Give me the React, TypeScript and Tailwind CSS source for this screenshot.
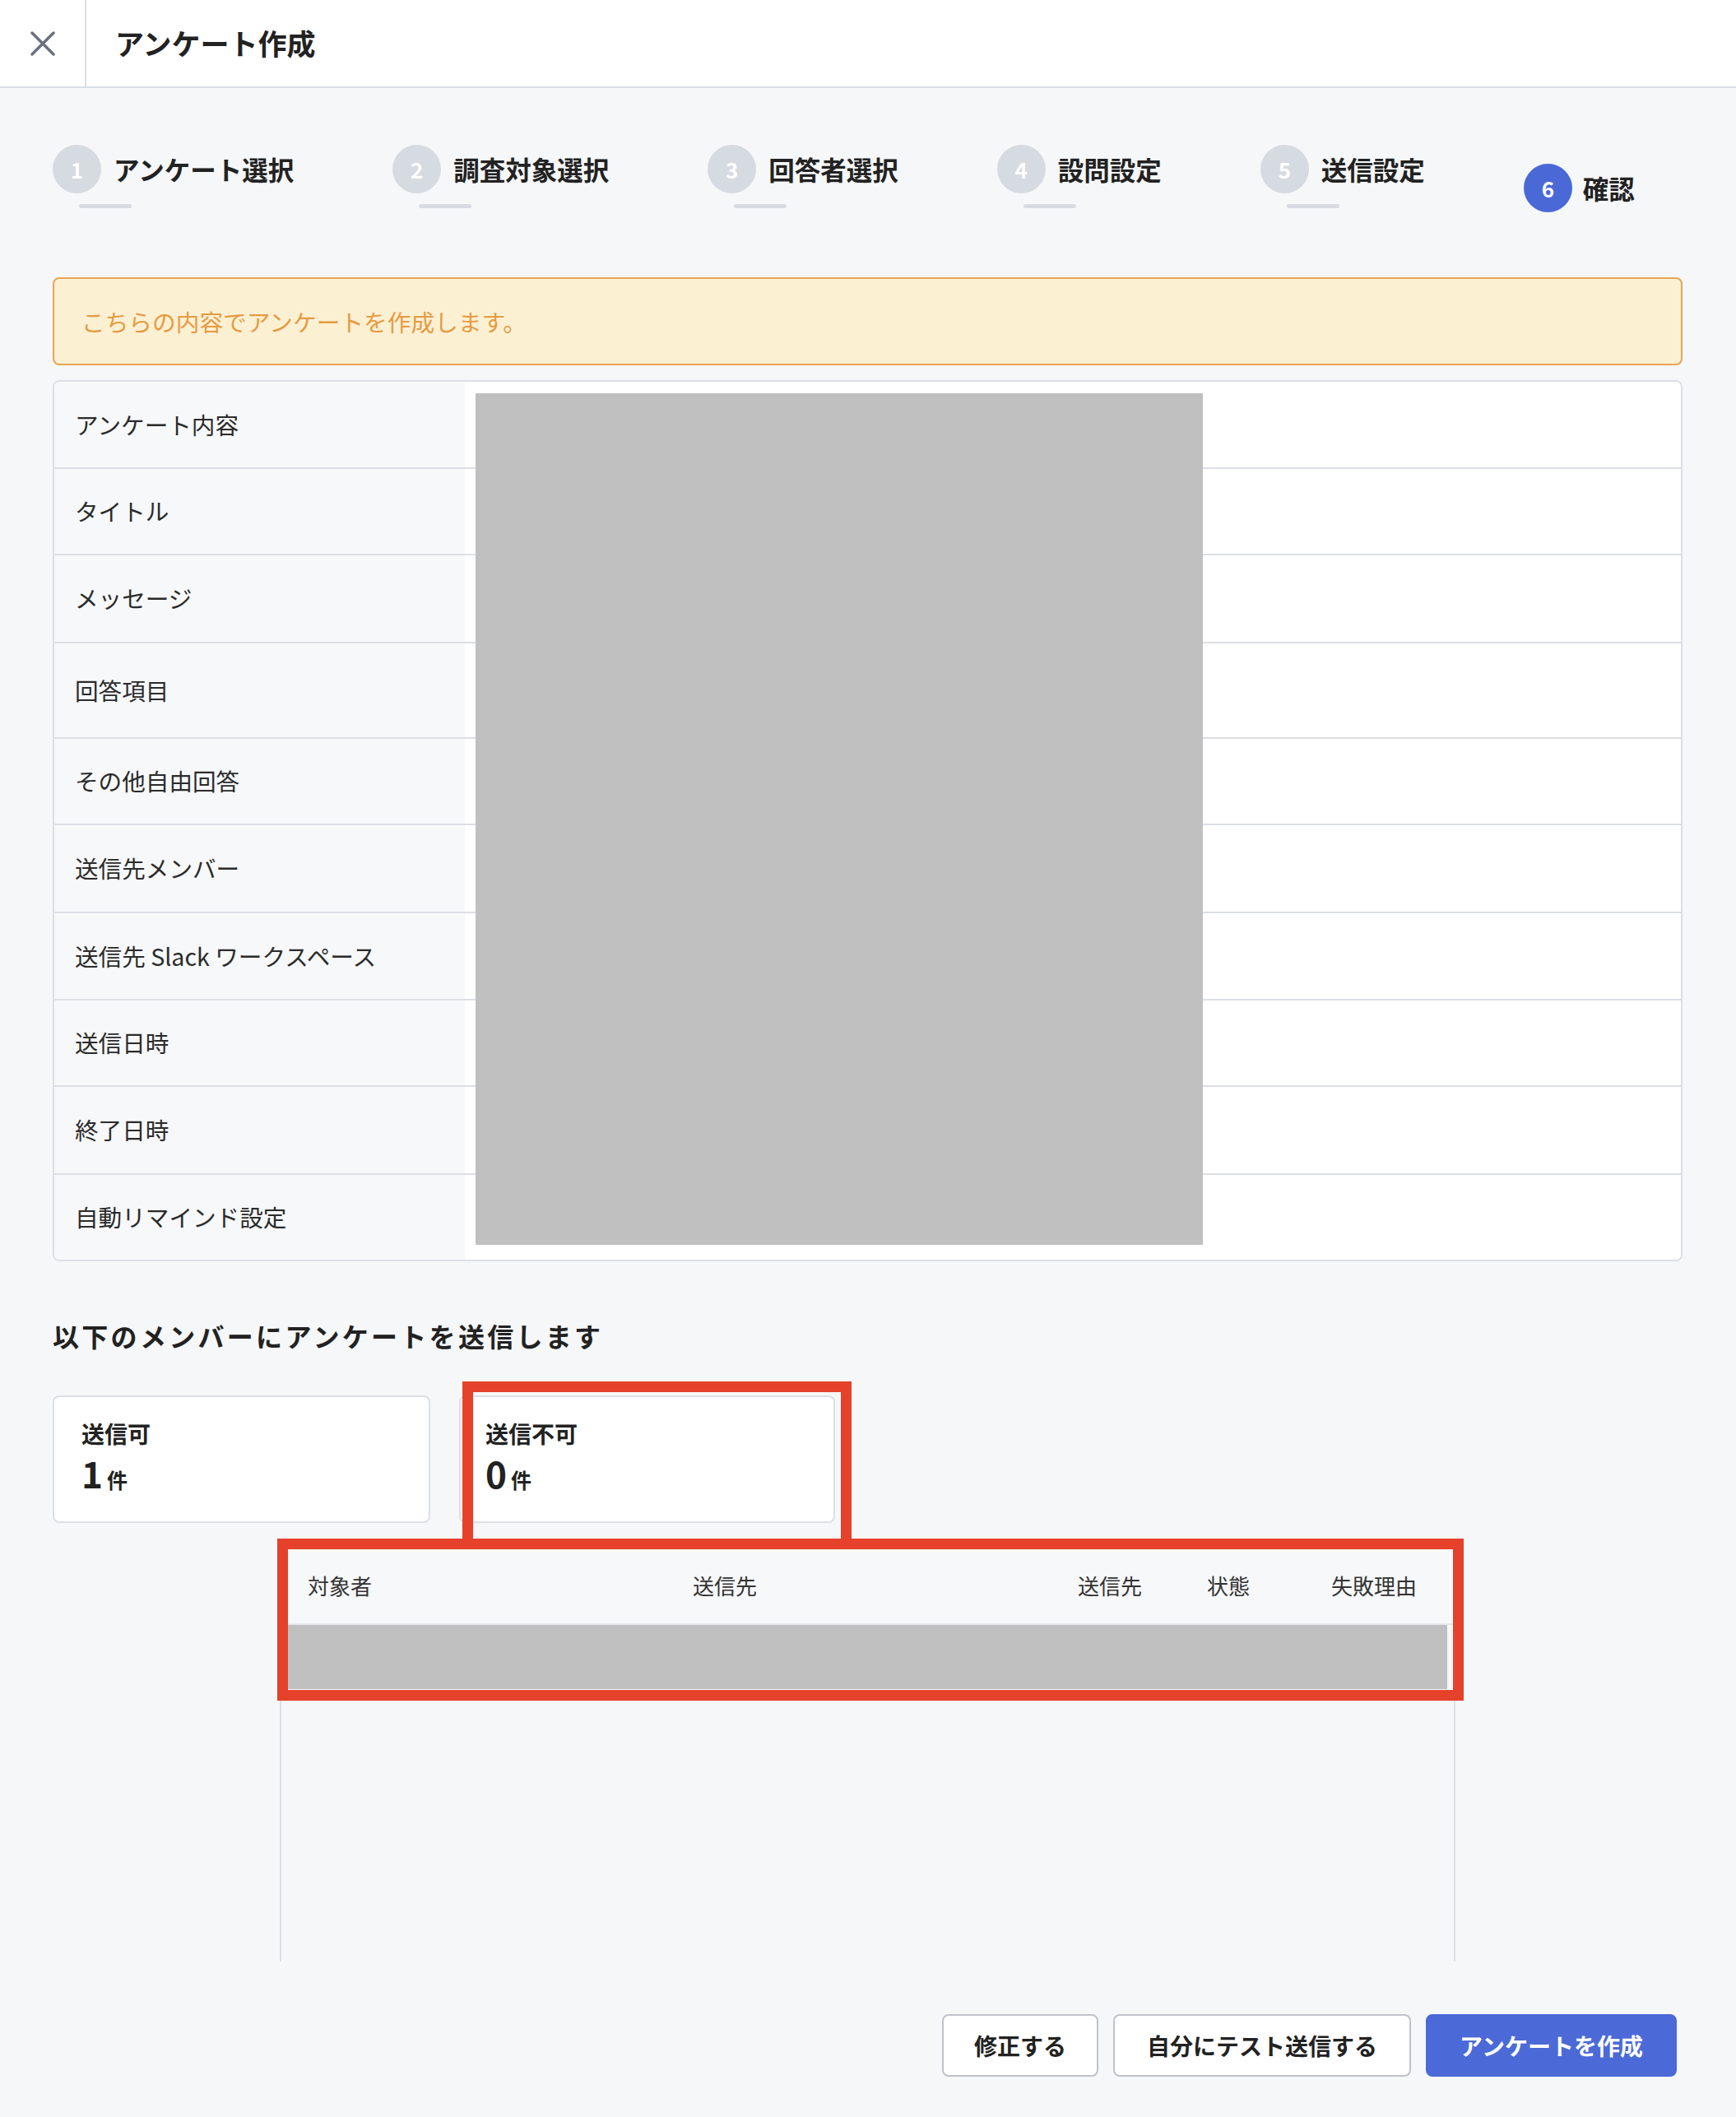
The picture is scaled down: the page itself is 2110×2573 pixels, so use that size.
import React from "react";

const steps = [
  { n: 1, label: "アンケート選択" },
  { n: 2, label: "調査対象選択" },
  { n: 3, label: "回答者選択" },
  { n: 4, label: "設問設定" },
  { n: 5, label: "送信設定" },
];

const rows = [
  { label: "アンケート内容", h: 106 },
  { label: "タイトル", h: 105 },
  { label: "メッセージ", h: 107 },
  { label: "回答項目", h: 116 },
  { label: "その他自由回答", h: 105 },
  { label: "送信先メンバー", h: 107 },
  { label: "送信先 Slack ワークスペース", h: 106 },
  { label: "送信日時", h: 105 },
  { label: "終了日時", h: 107 },
  { label: "自動リマインド設定", h: 103 },
];

export default function App() {
  return (
    <div className="min-h-[2573px] w-[2110px] bg-[#f6f7f9] font-['Noto_Sans_CJK_JP','Noto_Sans',sans-serif] text-[#222]">
      {/* Header */}
      <header className="flex h-[107px] items-stretch border-b-2 border-[#d9dde3] bg-white">
        <div className="flex w-[105px] items-center justify-center border-r-2 border-[#dadde3]">
          <svg width="30" height="30" viewBox="0 0 30 30" fill="none">
            <path d="M2 2 L28 28 M28 2 L2 28" stroke="#6b7080" strokeWidth="3.5" strokeLinecap="round" />
          </svg>
        </div>
        <div className="flex items-center pl-[35px] text-[35px] font-bold text-[#222]">
          アンケート作成
        </div>
      </header>

      <main className="px-[64px] pt-[69px] pr-[65px]">
        {/* Steps */}
        <div className="flex h-[82px] items-start gap-[120px]">
          {steps.map((s) => (
            <div key={s.n} className="flex flex-col">
              <div className="flex items-center gap-[15px]">
                <div className="flex h-[59px] w-[59px] items-center justify-center rounded-full bg-[#d6dae1] text-[26px] font-bold text-white">
                  {s.n}
                </div>
                <span className="text-[31.5px] font-bold leading-none text-[#222]">{s.label}</span>
              </div>
              <div className="ml-[32px] mt-[13px] h-[5px] w-[64px] rounded-full bg-[#d8dce2]" />
            </div>
          ))}
          <div className="mt-[23px] flex items-center gap-[13px]">
            <div className="flex h-[59px] w-[59px] items-center justify-center rounded-full bg-[#4a69d6] text-[26px] font-bold text-white">
              6
            </div>
            <span className="text-[31.5px] font-bold leading-none text-[#222]">確認</span>
          </div>
        </div>

        {/* Alert */}
        <div className="mt-[79px] flex h-[107px] items-center rounded-[8px] border-2 border-[#e9a654] bg-[#fcf0d3] pl-[33px] text-[28.7px] text-[#e69b42]">
          こちらの内容でアンケートを作成します。
        </div>

        {/* Summary table */}
        <div className="relative mt-[18px] overflow-hidden rounded-[8px] border-2 border-[#dcdfe5] bg-white">
          {rows.map((r, i) => (
            <div
              key={r.label}
              className={`flex ${i < rows.length - 1 ? "border-b-2 border-[#dcdfe5]" : ""}`}
              style={{ height: r.h }}
            >
              <div className="flex w-[499px] items-center bg-[#f7f8fa] pl-[25px] text-[28.6px] text-[#2b2b2b]">
                {r.label}
              </div>
              <div className="flex-1 bg-white" />
            </div>
          ))}
          <div className="absolute left-[512px] top-[14px] h-[1035px] w-[884px] bg-[#c0c0c0]" />
        </div>

        {/* Heading */}
        <h2 className="mt-[65px] text-[32px] font-bold leading-[50px] tracking-[3.3px] text-[#222]">
          以下のメンバーにアンケートを送信します
        </h2>

        {/* Cards */}
        <div className="mt-[48px] flex gap-[35px]">
          <div className="h-[155px] w-[459px] rounded-[8px] border-2 border-[#dcdfe5] bg-white pl-[33px] pt-[25px]">
            <div className="text-[28px] font-bold leading-[39px]">送信可</div>
            <div className="mt-[6px] flex items-baseline">
              <span className="text-[44px] font-bold leading-[44px]">1</span>
              <span className="ml-[5px] text-[25px] font-bold">件</span>
            </div>
          </div>
          <div className="h-[155px] w-[457px] rounded-[8px] border-2 border-[#dcdfe5] bg-white pl-[30px] pt-[25px]">
            <div className="text-[28px] font-bold leading-[39px]">送信不可</div>
            <div className="mt-[6px] flex items-baseline">
              <span className="text-[44px] font-bold leading-[44px]">0</span>
              <span className="ml-[5px] text-[25px] font-bold">件</span>
            </div>
          </div>
        </div>

        {/* Recipients table */}
        <div className="ml-[276px] mt-[26px] flex h-[507px] w-[1429px] flex-col border-x-2 border-t-2 border-[#dcdfe5]">
          <div className="grid h-[96px] grid-cols-[468px_468px_157px_151px_1fr] items-center border-b-2 border-[#e3e6eb] bg-[#f7f8fa] px-[32px] text-[26px] text-[#333]">
            <span>対象者</span>
            <span>送信先</span>
            <span>送信先</span>
            <span>状態</span>
            <span>失敗理由</span>
          </div>
          <div className="h-[80px] pr-[8px]">
            <div className="h-[78px] bg-[#c0c0c0]" />
          </div>
        </div>

        {/* Buttons */}
        <div className="mr-[7px] mt-[64px] flex justify-end gap-[18px] pb-[49px]">
          <button className="h-[76px] rounded-[8px] border-2 border-[#bfc2ca] bg-white px-[37px] text-[28px] font-bold text-[#222]">
            修正する
          </button>
          <button className="h-[76px] rounded-[8px] border-2 border-[#bfc2ca] bg-white px-[39px] text-[28px] font-bold text-[#222]">
            自分にテスト送信する
          </button>
          <button className="h-[76px] rounded-[8px] border-2 border-[#4b6ad7] bg-[#4b6ad7] px-[39px] text-[28px] font-bold text-white">
            アンケートを作成
          </button>
        </div>
      </main>

      {/* Annotation boxes */}
      <div className="pointer-events-none absolute left-[562px] top-[1679px] h-[204px] w-[473px] border-[13px] border-[#e5412b]" />
      <div className="pointer-events-none absolute left-[337px] top-[1870px] h-[197px] w-[1442px] border-[13px] border-[#e5412b]" />
    </div>
  );
}
